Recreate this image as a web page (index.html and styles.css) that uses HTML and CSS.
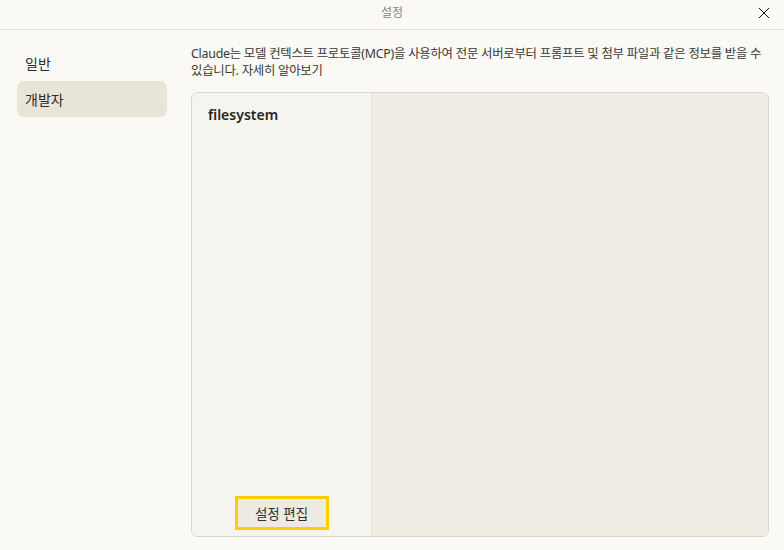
FILE: index.html
```html
<!DOCTYPE html>
<html lang="ko">
<head>
<meta charset="utf-8">
<link rel="stylesheet" href="styles.css">
</head>
<body>
<div class="titlebar">
  <span class="title">설정</span>
  <button class="close" aria-label="닫기">
    <svg width="12" height="12" viewBox="0 0 12 12"><path d="M1 1 L11 11 M11 1 L1 11" stroke="#111" stroke-width="1" fill="none"/></svg>
  </button>
</div>
<div class="layout">
  <nav class="sidebar">
    <div class="nav-item">일반</div>
    <div class="nav-item active">개발자</div>
  </nav>
  <main class="main">
    <p class="desc">Claude는 모델 컨텍스트 프로토콜(MCP)을 사용하여 전문 서버로부터 프롬프트 및 첨부 파일과 같은 정보를 받을 수 있습니다. 자세히 알아보기</p>
    <div class="panel">
      <div class="list">
        <div class="server">filesystem</div>
        <div class="list-foot">
          <button class="edit">설정 편집</button>
        </div>
      </div>
      <div class="detail"></div>
    </div>
  </main>
</div>
</body>
</html>
```

FILE: styles.css
```css
html, body {
  margin: 0;
  padding: 0;
  height: 100%;
}
body {
  background: #faf9f5;
  font-family: "Noto Sans", "Noto Sans CJK KR", sans-serif;
  color: #2b2a26;
  overflow: hidden;
}
.titlebar {
  height: 29px;
  border-bottom: 1px solid #e2dfd7;
  display: flex;
  align-items: center;
  justify-content: center;
  position: relative;
}
.title {
  font-size: 12px;
  color: #8a8883;
  margin-top: -6px;
}
.close {
  position: absolute;
  right: 13px;
  top: 6px;
  width: 14px;
  height: 14px;
  padding: 0;
  border: 0;
  background: transparent;
  display: flex;
  align-items: center;
  justify-content: center;
}
.layout {
  display: flex;
  gap: 24px;
  padding: 15px 15px 0 17px;
  height: 520px;
  box-sizing: border-box;
}
.sidebar {
  width: 150px;
  flex: none;
  display: flex;
  flex-direction: column;
}
.nav-item {
  height: 36px;
  display: flex;
  align-items: center;
  padding-left: 8px;
  font-size: 14px;
  color: #2f2d28;
  border-radius: 7px;
}
.nav-item.active {
  background: #e8e4d8;
}
.main {
  flex: 1;
  display: flex;
  flex-direction: column;
  padding-bottom: 13px;
}
.desc {
  margin: 0 -6px 13px 0;
  font-size: 12.4px;
  line-height: 17px;
  letter-spacing: -0.25px;
  color: #3a3833;
}
.panel {
  flex: 1;
  display: flex;
  border: 1px solid #d9d6cc;
  border-radius: 7px;
  overflow: hidden;
}
.list {
  width: 179px;
  flex: none;
  background: #f5f4ef;
  border-right: 1px solid #e3e0d7;
  display: flex;
  flex-direction: column;
}
.server {
  padding: 12px 16px 0;
  font-size: 14px;
  font-weight: 600;
  color: #26251f;
}
.list-foot {
  margin-top: auto;
  display: flex;
  justify-content: center;
  padding-bottom: 6px;
}
.edit {
  width: 94px;
  height: 34px;
  border: 3px solid #ffcc00;
  background: #edebe3;
  font-family: "Noto Sans", "Noto Sans CJK KR", sans-serif;
  font-size: 13.5px;
  color: #33312c;
  padding: 0;
}
.detail {
  flex: 1;
  background: #f0ede5;
}
```
